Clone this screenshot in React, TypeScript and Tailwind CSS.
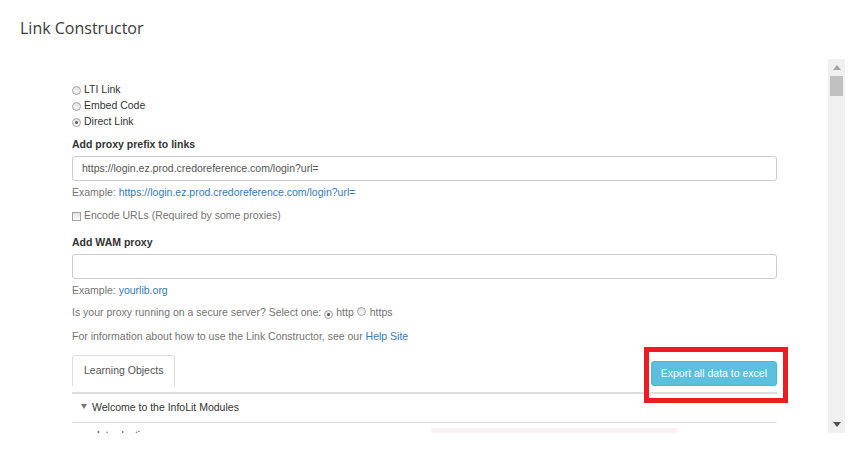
import React from "react";

function Radio({ checked }: { checked?: boolean }) {
  return (
    <span className="inline-flex h-[9px] w-[9px] shrink-0 items-center justify-center rounded-full border border-[#a3a3a3] bg-gradient-to-b from-[#e4e4e4] to-[#fafafa]">
      {checked && <span className="h-[3px] w-[3px] rounded-full bg-[#555]" />}
    </span>
  );
}

function Checkbox() {
  return (
    <span className="inline-block h-[9px] w-[9px] shrink-0 border border-[#a3a3a3] bg-gradient-to-b from-[#e4e4e4] to-[#fafafa]" />
  );
}

function Scrollbar() {
  return (
    <div className="flex h-full w-[17px] shrink-0 flex-col items-center bg-[#f0f0f0]">
      <svg width="8" height="5" viewBox="0 0 8 5" className="mt-[6px]">
        <polygon points="4,0 8,5 0,5" fill="#a3a3a3" />
      </svg>
      <div className="mt-[6px] h-[20px] w-[13px] bg-[#c1c1c1]" />
      <div className="flex-1" />
      <svg width="8" height="5" viewBox="0 0 8 5" className="mb-[6px]">
        <polygon points="0,0 8,0 4,5" fill="#505050" />
      </svg>
    </div>
  );
}

export default function App() {
  return (
    <div className="relative h-[462px] w-[863px] overflow-hidden bg-white font-['Liberation_Sans',Arial,sans-serif] text-[10.5px] text-[#333]">
      <h1 className="h-[59px] pl-[20px] pt-[17px] font-['Open_Sans',sans-serif] text-[16px] leading-[22px] font-normal text-[#3b3b3b]">
        Link Constructor
      </h1>

      <div className="flex h-[374px] w-[845px]">
        <div className="flex-1 overflow-hidden pl-[72px]">
          <div className="w-[705px]">
            <div className="mt-[23px] flex flex-col">
              <label className="flex h-[16px] items-center gap-[3px]">
                <Radio />
                LTI Link
              </label>
              <label className="flex h-[16px] items-center gap-[3px]">
                <Radio />
                Embed Code
              </label>
              <label className="flex h-[16px] items-center gap-[3px]">
                <Radio checked />
                Direct Link
              </label>
            </div>

            <div className="mt-[6px] h-[16px] leading-[16px] font-bold">Add proxy prefix to links</div>
            <div className="mt-[4px] flex h-[25px] items-center rounded-[3px] border border-[#ccc] px-[9px] text-[#555]">
              https://login.ez.prod.credoreference.com/login?url=
            </div>
            <div className="mt-[3px] h-[16px] leading-[16px] text-[#737373]">
              Example: <span className="text-[#337ab7]">https://login.ez.prod.credoreference.com/login?url=</span>
            </div>
            <label className="mt-[8px] flex h-[16px] items-center gap-[3px] text-[#737373]">
              <Checkbox />
              Encode URLs (Required by some proxies)
            </label>

            <div className="mt-[10px] h-[16px] leading-[16px] font-bold">Add WAM proxy</div>
            <div className="mt-[4px] h-[25px] rounded-[3px] border border-[#ccc]" />
            <div className="mt-[3px] h-[16px] leading-[16px] text-[#737373]">
              Example: <span className="text-[#337ab7]">yourlib.org</span>
            </div>
            <div className="mt-[7px] flex h-[16px] items-center text-[#737373]">
              <span>Is your proxy running on a secure server? Select one:</span>
              <span className="ml-[3px]"><Radio checked /></span>
              <span className="ml-[3px]">http</span>
              <span className="ml-[3px]"><Radio /></span>
              <span className="ml-[4px]">https</span>
            </div>
            <div className="mt-[7px] h-[16px] leading-[16px] text-[#737373]">
              For information about how to use the Link Constructor, see our{" "}
              <span className="text-[#337ab7]">Help Site</span>
            </div>

            <div className="mt-[11px] flex h-[37px] items-start justify-between">
              <div className="flex h-[31px] items-center rounded-t-[3px] border border-b-0 border-[#ddd] px-[11px] text-[#555]">
                Learning Objects
              </div>
              <button
                type="button"
                className="mt-[6px] h-[25px] rounded-[3px] border border-[#46b8da] bg-[#5bc0de] px-[9px] text-[10.5px] text-white"
              >
                Export all data to excel
              </button>
            </div>
            <div className="h-[2px] bg-[#ddd]" />

            <div className="flex h-[28px] items-center pl-[9px]">
              <svg width="6" height="5" viewBox="0 0 6 5" className="mb-[3px]">
                <polygon points="0,0 6,0 3,5" fill="#777" />
              </svg>
              <span className="ml-[5px]">Welcome to the InfoLit Modules</span>
            </div>
            <div className="h-px bg-[#ddd]" />

            <div className="mt-[5px] flex h-[16px] items-center">
              <span className="w-[359px] shrink-0 pl-[25px] text-[#333]">Introduction</span>
              <div className="h-[16px] w-[247px] bg-[#f9f2f4]" />
            </div>
          </div>
        </div>
        <Scrollbar />
      </div>

      <div className="absolute left-[644px] top-[347px] h-[56px] w-[144px] border-[5px] border-[#ed1c24]" />
    </div>
  );
}
